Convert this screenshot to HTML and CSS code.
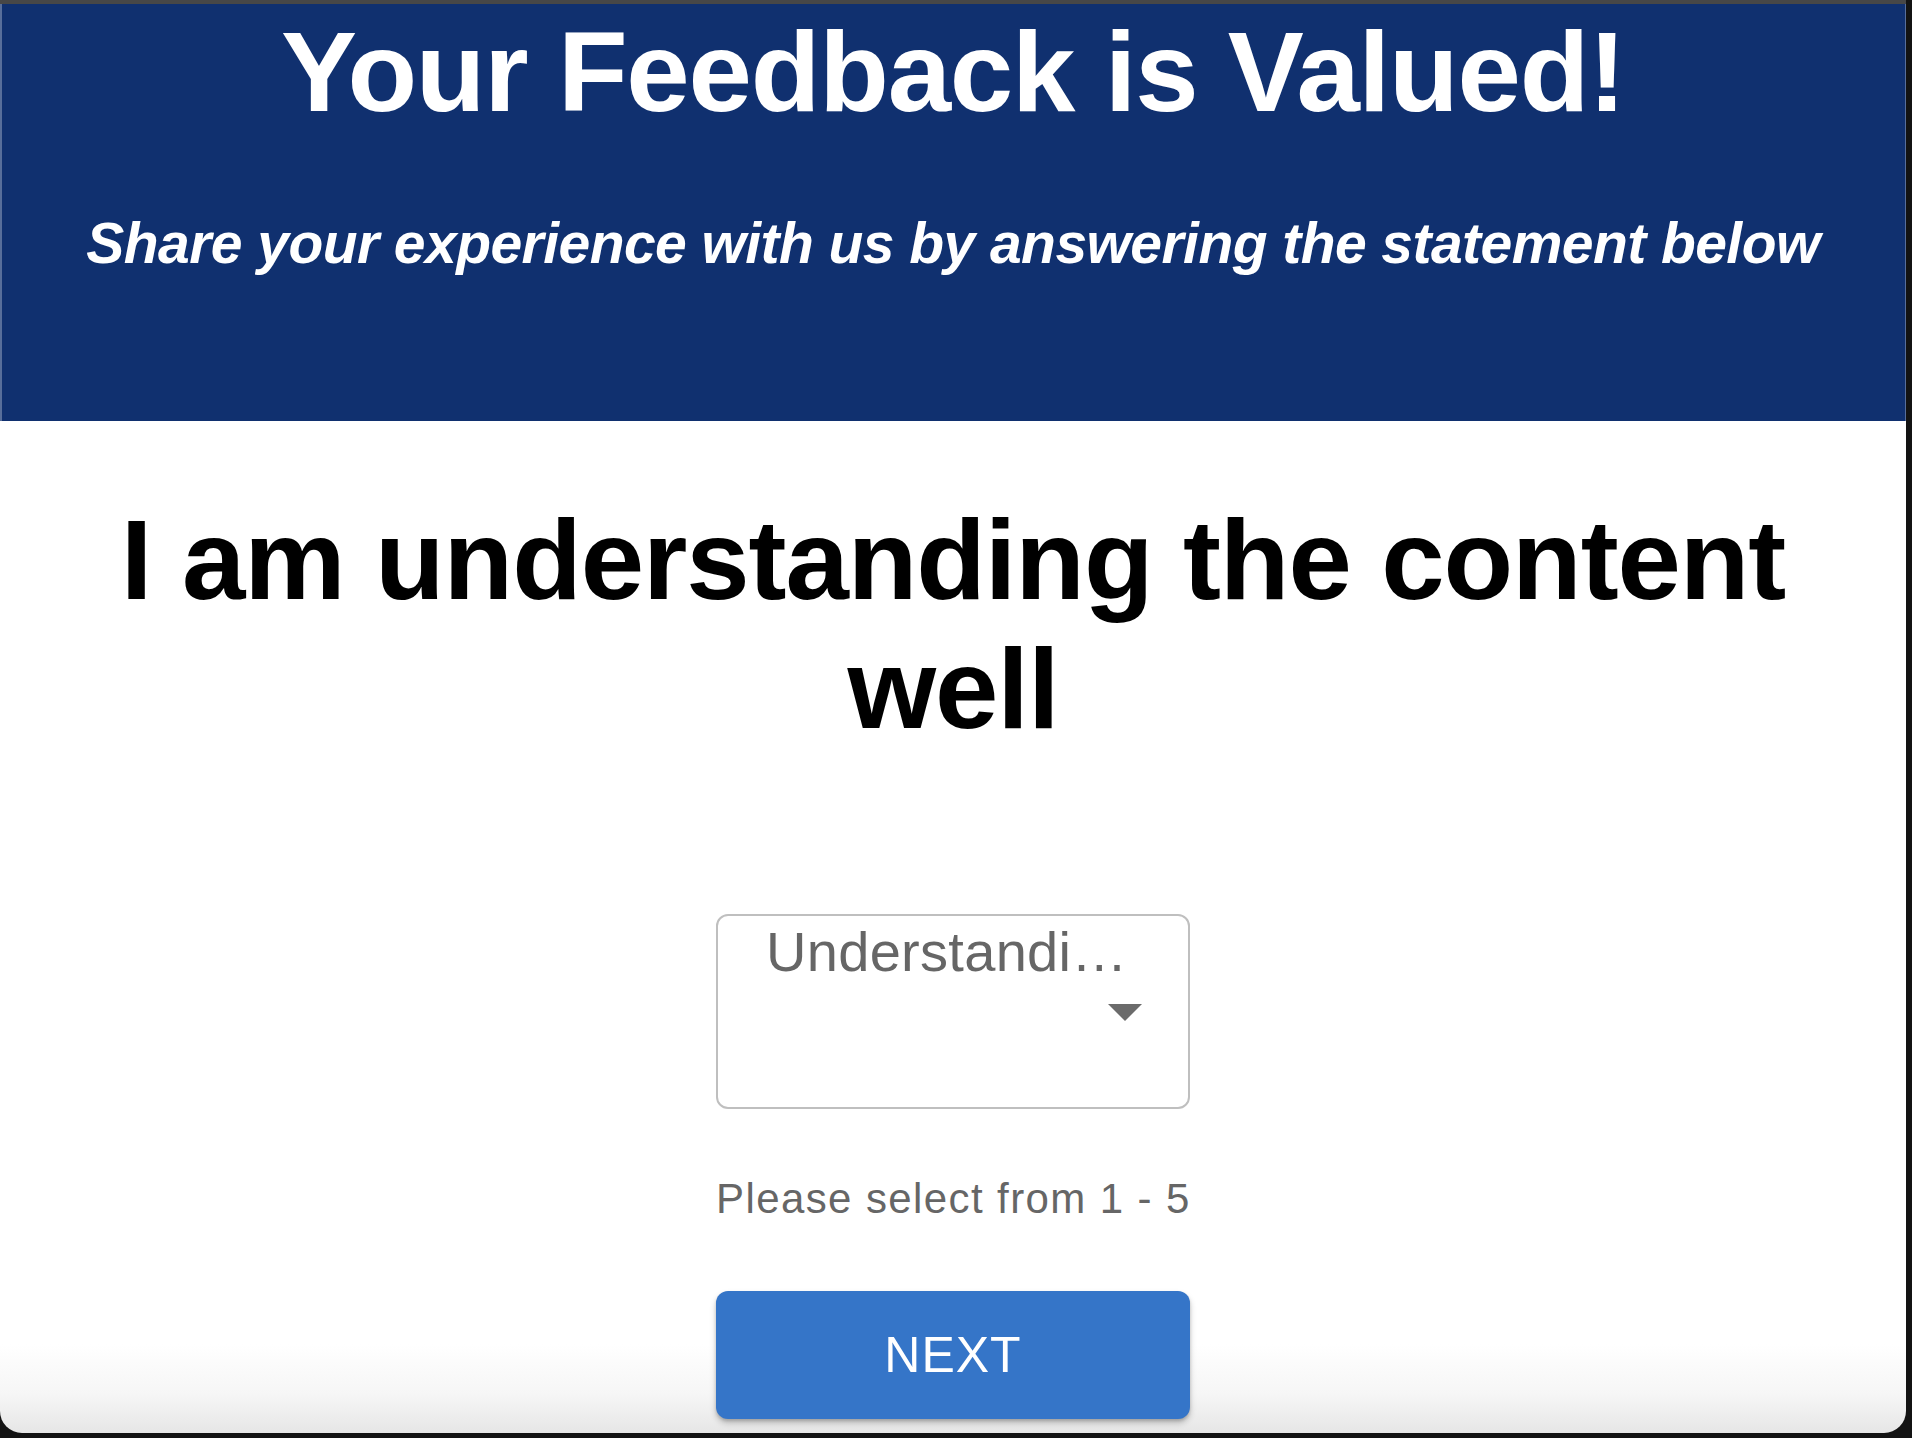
FILE: index.html
```html
<!DOCTYPE html>
<html lang="en">
<head>
<meta charset="utf-8">
<title>Your Feedback is Valued!</title>
<link rel="stylesheet" href="styles.css">
</head>
<body>
<div class="window">
  <header class="hero">
    <h1 class="hero-title">Your Feedback is Valued!</h1>
    <p class="hero-sub">Share your experience with us by answering the statement below</p>
  </header>
  <main class="content">
    <h2 class="statement">I am understanding the content well</h2>
    <form class="form">
      <div class="select">
        <span class="select-value">Understandi…</span>
        <svg class="select-arrow" viewBox="0 0 34 17" aria-hidden="true"><path d="M0 0h34L17 17z"/></svg>
      </div>
      <p class="helper">Please select from 1 - 5</p>
      <button type="button" class="next">NEXT</button>
    </form>
  </main>
</div>
</body>
</html>
```

FILE: styles.css
```css
html, body {
  margin: 0;
  padding: 0;
}
body {
  background: #131313;
  width: 1912px;
  height: 1438px;
  overflow: hidden;
  font-family: "Liberation Sans", Arial, Helvetica, sans-serif;
}
.window {
  width: 1906px;
  height: 1433px;
  box-sizing: border-box;
  border-top: 4px solid #474747;
  border-radius: 0 0 22px 22px;
  overflow: hidden;
  background: linear-gradient(to bottom, #ffffff 0, #ffffff 1340px, #f6f6f6 1390px, #e6e6e6 100%);
  display: flex;
  flex-direction: column;
}
.hero {
  flex: 0 0 417px;
  background: #10306f;
  box-shadow: inset 2px 0 0 rgba(255,255,255,0.3), inset -1px 0 0 rgba(255,255,255,0.3);
  color: #ffffff;
  text-align: center;
  padding: 2px 0 0;
  height: 417px;
  box-sizing: border-box;
}
.hero-title {
  margin: 0;
  font-size: 114px;
  line-height: 131px;
  font-weight: 700;
  letter-spacing: -1.2px;
}
.hero-sub {
  margin: 73px 0 0;
  font-size: 57px;
  line-height: 66px;
  font-weight: 700;
  font-style: italic;
  letter-spacing: -0.55px;
}
.content {
  flex: 0 0 auto;
  display: flex;
  flex-direction: column;
  align-items: center;
  padding: 0 40px;
}
.statement {
  margin: 74px 0 0;
  font-size: 114px;
  line-height: 129px;
  font-weight: 700;
  letter-spacing: -1.1px;
  text-align: center;
  color: #000000;
}
.form {
  margin-top: 161px;
  width: 474px;
  display: flex;
  flex-direction: column;
}
.select {
  flex: 0 0 195px;
  position: relative;
  height: 195px;
  box-sizing: border-box;
  border: 2px solid #bfbfbf;
  border-radius: 12px;
  padding: 4px 0 0 48px;
}
.select-value {
  display: block;
  font-size: 56px;
  line-height: 64px;
  letter-spacing: 0.3px;
  color: #666666;
  white-space: nowrap;
}
.select-arrow {
  position: absolute;
  right: 46px;
  top: 88px;
  width: 34px;
  height: 17px;
  fill: #6b6b6b;
}
.helper {
  margin: 66px 0 0;
  font-size: 42px;
  line-height: 48px;
  letter-spacing: 1.4px;
  white-space: nowrap;
  color: #666666;
}
.next {
  flex: 0 0 128px;
  margin-top: 68px;
  height: 128px;
  border: none;
  border-radius: 12px;
  background: #3575c8;
  color: #ffffff;
  font-family: "Liberation Sans", Arial, Helvetica, sans-serif;
  font-size: 50px;
  letter-spacing: 1px;
  box-shadow: 0 4px 6px rgba(0,0,0,0.22), 0 2px 3px rgba(0,0,0,0.14);
  cursor: pointer;
}
```
